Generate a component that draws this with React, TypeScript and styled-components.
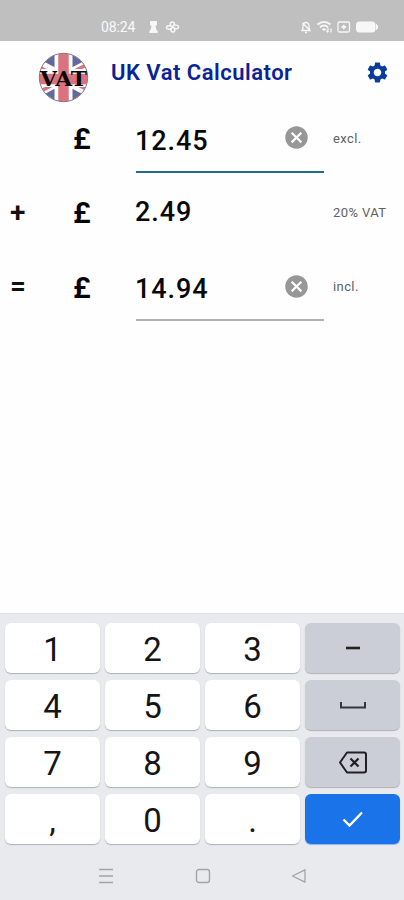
import React from 'react';
import styled, { createGlobalStyle } from 'styled-components';
import { MdSettings, MdCancel } from 'react-icons/md';

const GlobalStyle = createGlobalStyle`
  * { box-sizing: border-box; }
  body { margin: 0; background: #fff; font-family: Roboto, "Liberation Sans", sans-serif; }
`;

const Screen = styled.div`
  width: 404px;
  height: 900px;
  display: flex;
  flex-direction: column;
  background: #fefefe;
  overflow: hidden;
`;

const StatusBar = styled.header`
  height: 41px;
  flex: none;
  display: flex;
  align-items: center;
  padding: 12px 25px 0 101px;
  background: #bfbfbf;
  color: #fff;
`;

const Clock = styled.span`
  width: 47px;
  font-size: 14px;
  line-height: 16px;
  letter-spacing: -0.1px;
  opacity: 0.9;
`;

const StatusIcons = styled.svg<{ $push?: boolean }>`
  display: block;
  flex: none;
  margin-left: ${(p) => (p.$push ? 'auto' : '0')};
  opacity: 0.88;
`;

const AppBar = styled.div`
  height: 61px;
  flex: none;
  display: flex;
  align-items: flex-start;
  padding: 11px 14px 0 38px;
`;

const Logo = styled.svg`
  display: block;
  flex: none;
  width: 51px;
  height: 51px;
`;

const Title = styled.h1`
  margin: 8px auto 0 22px;
  font-size: 22px;
  line-height: 26px;
  font-weight: 600;
  letter-spacing: 0.5px;
  color: #0a2396;
  white-space: nowrap;
`;

const SettingsButton = styled.div`
  height: 25px;
  margin-top: 8px;
  font-size: 25px;
  color: #0a3c9c;
  svg { display: block; }
`;

const Form = styled.main`
  flex: 1;
  display: flex;
  flex-direction: column;
`;

const Row = styled.div<{ $height: number }>`
  height: ${(p) => p.$height}px;
  display: grid;
  grid-template-columns: 64px 72px 188px 1fr;
  align-items: start;
`;

const Operator = styled.span<{ $top: number }>`
  padding: ${(p) => p.$top}px 0 0 10px;
  font-size: 28px;
  line-height: 32px;
  font-weight: 600;
  color: #111;
`;

const Currency = styled.span<{ $top: number }>`
  padding: ${(p) => p.$top}px 0 0 9px;
  font-size: 30px;
  line-height: 36px;
  font-weight: 600;
  color: #050505;
`;

const Field = styled.div<{ $top: number; $line?: string }>`
  align-self: stretch;
  display: flex;
  align-items: flex-start;
  justify-content: space-between;
  padding: ${(p) => p.$top}px 14px 0 0;
  border-bottom: 2px solid ${(p) => p.$line || 'transparent'};
`;

const Amount = styled.span`
  margin-left: -1px;
  font-size: 27px;
  line-height: 32px;
  font-weight: 500;
  letter-spacing: 0.95px;
  color: #080808;
`;

const Clear = styled.span<{ $lift: number }>`
  margin-top: ${(p) => p.$lift}px;
  font-size: 27px;
  color: #979797;
  svg { display: block; }
`;

const Note = styled.span<{ $top: number }>`
  padding: ${(p) => p.$top}px 0 0 9px;
  font-size: 13px;
  line-height: 16px;
  letter-spacing: 0.4px;
  color: #606060;
  white-space: nowrap;
`;

const Keyboard = styled.section`
  height: 239px;
  flex: none;
  display: grid;
  grid-template-columns: repeat(4, 95px);
  grid-template-rows: repeat(4, 50px);
  column-gap: 5px;
  row-gap: 7px;
  padding: 9px 4px 0 5px;
  background: #e8eaed;
  border-top: 1px solid #dddfe2;
`;

const Key = styled.div<{ $tone?: 'grey' | 'blue' }>`
  display: flex;
  align-items: center;
  justify-content: center;
  border-radius: 6px;
  padding-top: ${(p) => (p.$tone ? 2 : 3)}px;
  font-size: 33px;
  line-height: 38px;
  color: #151515;
  background: ${(p) => (p.$tone === 'blue' ? '#1a73e8' : p.$tone === 'grey' ? '#cbced6' : '#fff')};
  box-shadow: 0 1px 1px ${(p) => (p.$tone === 'blue' ? '#8fb4e8' : '#aeb1b5')};
`;

const NavBar = styled.footer`
  height: 48px;
  flex: none;
  display: flex;
  justify-content: space-between;
  align-items: center;
  padding: 0 97px 0 98px;
  background: #e8eaed;
`;

const keyIcons: Record<string, React.ReactNode> = {
  minus: (
    <svg width="16" height="6" viewBox="0 0 16 6"><path d="M1 2h14" stroke="#222" strokeWidth="2.6" /></svg>
  ),
  space: (
    <svg width="28" height="10" viewBox="0 0 28 10">
      <path d="M2 1v5.5h24V1" fill="none" stroke="#33363a" strokeWidth="2" />
    </svg>
  ),
  back: (
    <svg width="30" height="26" viewBox="0 0 30 26">
      <path d="M9 2.5h17a2 2 0 0 1 2 2v16a2 2 0 0 1-2 2H9L2 12.5z" fill="none" stroke="#1f2124" strokeWidth="2" strokeLinejoin="round" />
      <path d="m12.5 8.5 8 8m0-8-8 8" stroke="#1f2124" strokeWidth="2.2" />
    </svg>
  ),
  done: (
    <svg width="24" height="20" viewBox="0 0 24 20">
      <path d="m2.5 9.5 6 6L21 2.500" fill="none" stroke="#fff" strokeWidth="2.4" />
    </svg>
  ),
};

const keys = ['1', '2', '3', 'minus', '4', '5', '6', 'space', '7', '8', '9', 'back', ',', '0', '.', 'done'];

function FlagLogo() {
  return (
    <Logo viewBox="0 0 51 51">
      <defs>
        <clipPath id="disc"><circle cx="25.5" cy="25.5" r="24" /></clipPath>
      </defs>
      <g clipPath="url(#disc)">
        <rect width="51" height="51" fill="#63699a" />
        <path d="M-14.500 5 65.500 47M65.500 5-14.500 47" stroke="#fff" strokeWidth="11" />
        <path d="M-14.500 7 25 27.500M65.500 4 25 25M65.500 46 25 25M-14.500 48 25 27.500" stroke="#db737f" strokeWidth="3.6" />
        <path d="M25.500 0v51M0 26h51" stroke="#fff" strokeWidth="18" />
        <path d="M25.500 0v51M0 27h51" stroke="#db737f" strokeWidth="10.5" />
      </g>
      <circle cx="25.5" cy="25.5" r="24.2" fill="none" stroke="#77737a" strokeWidth="0.9" />
      <text x="25.5" y="33.500" textAnchor="middle" textLength="47" lengthAdjust="spacingAndGlyphs" fontFamily='"DejaVu Serif", serif' fontWeight="700" fontSize="20" fill="#080808">VAT</text>
    </Logo>
  );
}

export default function App() {
  return (
    <>
      <GlobalStyle />
      <Screen>
        <StatusBar>
          <Clock>08:24</Clock>
          <StatusIcons width="34" height="14" viewBox="0 0 34 14" fill="none" stroke="#fff">
            <path d="M2 1h7v4L7.500 6l1 4 1.200 1v2H1.300v-2l1.200-1 1-4L2 5z" fill="#fff" stroke="none" />
            <path d="M24.500 7c-3-1-3-5 0-5 2.500 0 2 3 0 5 1-3 6-2 6 0 0 2.500-4 2-6 0 3 1 3 5 0 5-2 0-2-3 0-5-1 3-6 2.500-6 .5s4-2.500 6-.5" strokeWidth="1.5" />
          </StatusIcons>
          <StatusIcons $push width="79" height="14" viewBox="0 0 79 14" fill="none" stroke="#fff">
            <path d="M2 10.500h8L9 8V5.500a3 3 0 0 0-6 0V8zM5 12.500h2M2.500 3l8 8" strokeWidth="1.3" />
            <path d="M17.500 4.500c4-3.500 9-3.500 13 0M20 7.200c2.500-2 5.500-2 8 0M22.500 10c1-1 2-1 3 0" strokeWidth="1.9" />
            <path d="M28 8v4m-1.500-1.500L28 12.500M31 12.500v-4" strokeWidth="1.3" />
            <rect x="38" y="2" width="11.5" height="10" rx="1.500" strokeWidth="1.3" />
            <path d="M43.750 4.800v4.400M41.500 7H46" strokeWidth="1.8" />
            <rect x="56" y="1.500" width="19.500" height="11" rx="3.500" fill="#fff" stroke="none" />
            <path d="M76.500 4.500c1.500 1 1.500 4 0 5z" fill="#fff" />
          </StatusIcons>
        </StatusBar>
        <AppBar>
          <FlagLogo />
          <Title>UK Vat Calculator</Title>
          <SettingsButton><MdSettings /></SettingsButton>
        </AppBar>
        <Form>
          <Row $height={70.5}>
            <Operator $top={0} />
            <Currency $top={19}>£</Currency>
            <Field $top={23} $line="#216a8c">
              <Amount>12.45</Amount>
              <Clear $lift={-1}><MdCancel /></Clear>
            </Field>
            <Note $top={29}>excl.</Note>
          </Row>
          <Row $height={72.5}>
            <Operator $top={24}>+</Operator>
            <Currency $top={22}>£</Currency>
            <Field $top={23}><Amount>2.49</Amount></Field>
            <Note $top={32}>20% VAT</Note>
          </Row>
          <Row $height={75.5}>
            <Operator $top={26}>=</Operator>
            <Currency $top={25}>£</Currency>
            <Field $top={28} $line="#b0b0b0">
              <Amount>14.94</Amount>
              <Clear $lift={0}><MdCancel /></Clear>
            </Field>
            <Note $top={34}>incl.</Note>
          </Row>
        </Form>
        <Keyboard>
          {keys.map((k) => (
            <Key key={k} $tone={k === 'done' ? 'blue' : k in keyIcons ? 'grey' : undefined}>
              {keyIcons[k] ?? k}
            </Key>
          ))}
        </Keyboard>
        <NavBar>
          <svg width="16" height="16" viewBox="0 0 16 16"><path d="M1 1.500h14M1 8h14M1 14.500h14" stroke="#a3a4a8" strokeWidth="1.5" /></svg>
          <svg width="16" height="16" viewBox="0 0 16 16"><rect x="1.5" y="1.5" width="13" height="13" rx="2.5" fill="none" stroke="#a3a4a8" strokeWidth="1.4" /></svg>
          <svg width="16" height="16" viewBox="0 0 16 16"><path d="M14 1.800v12.400L1.500 8z" fill="none" stroke="#a3a4a8" strokeWidth="1.3" strokeLinejoin="round" /></svg>
        </NavBar>
      </Screen>
    </>
  );
}
